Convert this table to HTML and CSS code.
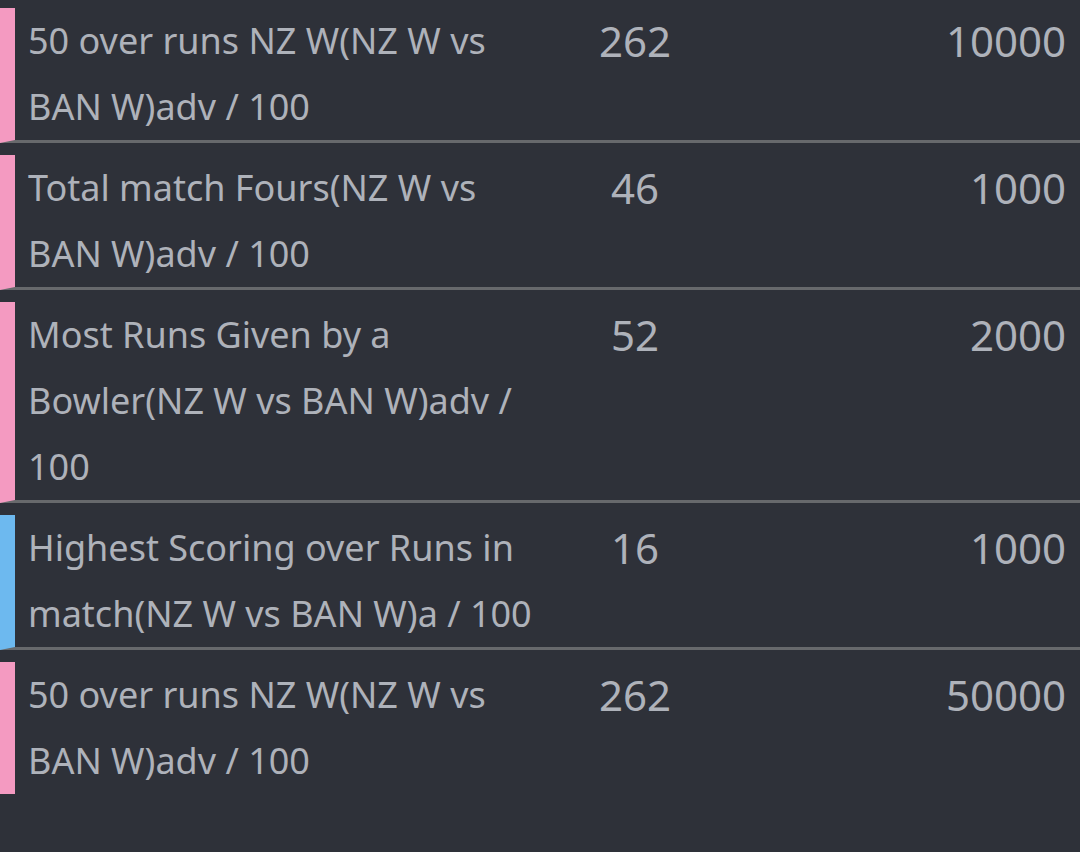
FILE: index.html
```html
<!DOCTYPE html>
<html lang="en">
<head>
<meta charset="utf-8">
<title>Markets</title>
<link rel="stylesheet" href="styles.css">
</head>
<body>
<div class="list">
  <div class="row pink">
    <div class="name">50 over runs NZ W(NZ W vs BAN W)adv / 100</div>
    <div class="rate">262</div>
    <div class="stake">10000</div>
  </div>
  <div class="row pink">
    <div class="name">Total match Fours(NZ W vs BAN W)adv / 100</div>
    <div class="rate">46</div>
    <div class="stake">1000</div>
  </div>
  <div class="row pink">
    <div class="name">Most Runs Given by a Bowler(NZ W vs BAN W)adv / 100</div>
    <div class="rate">52</div>
    <div class="stake">2000</div>
  </div>
  <div class="row blue">
    <div class="name">Highest Scoring over Runs in match(NZ W vs BAN W)a / 100</div>
    <div class="rate">16</div>
    <div class="stake">1000</div>
  </div>
  <div class="row pink last">
    <div class="name">50 over runs NZ W(NZ W vs BAN W)adv / 100</div>
    <div class="rate">262</div>
    <div class="stake">50000</div>
  </div>
</div>
</body>
</html>
```
FILE: styles.css
```css
html, body {
  margin: 0;
  padding: 0;
  background: #2e3139;
}
body {
  width: 1080px;
  height: 852px;
  overflow: hidden;
  font-family: "Noto Sans", "Open Sans", sans-serif;
  color: #aeb2ba;
}
.list {
  display: flex;
  flex-direction: column;
  gap: 12px;
  padding-top: 8px;
}
.row {
  display: grid;
  grid-template-columns: 530px 154px 1fr;
  padding-left: 13px;
  padding-right: 14px;
  border-left: 15px solid #f49ac1;
  border-bottom: 3px solid #67696c;
  font-size: 36px;
  line-height: 66px;
}
.row.blue {
  border-left-color: #6db9ef;
}
.row.last {
  border-bottom: none;
}
.rate,
.stake {
  font-size: 42px;
}
.rate {
  text-align: center;
}
.stake {
  text-align: right;
}
```
